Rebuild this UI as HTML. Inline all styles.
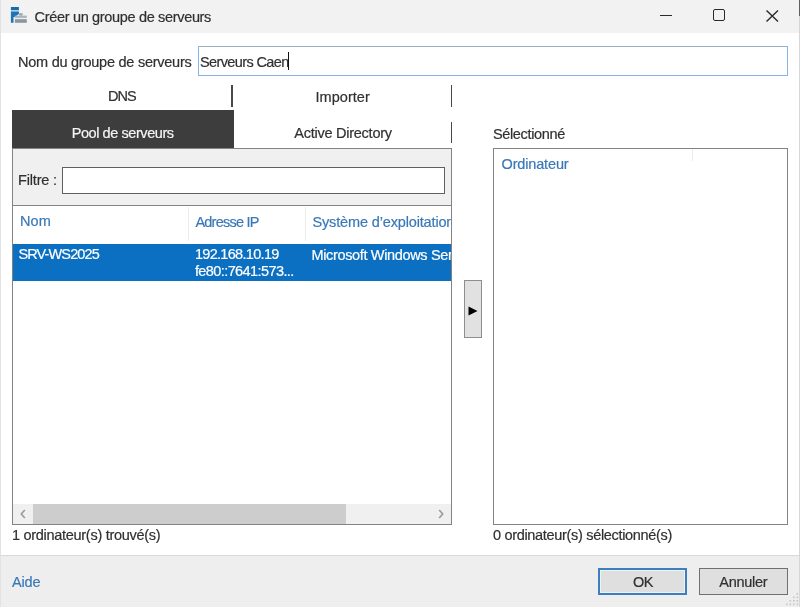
<!DOCTYPE html>
<html><head><meta charset="utf-8">
<style>
*{margin:0;padding:0;box-sizing:border-box}
html,body{width:800px;height:607px;overflow:hidden;background:#fff}body{filter:blur(0.35px)}
body{position:relative;font-family:"Liberation Sans",sans-serif;font-size:14.5px;color:#303030}
.a{position:absolute}
.t{position:absolute;white-space:nowrap;line-height:14px;-webkit-text-stroke:0.2px currentColor}
.titlebar{left:0;top:0;width:800px;height:33.3px;background:#f2f2f2}
.lborder{left:0;top:0;width:1.3px;height:607px;background:#e2e2e2}
.box{position:absolute;border:1px solid #838383}
.sep{position:absolute;width:1.3px;background:#484848}
.hdr{color:#3a78b8}
.footer{left:0;top:555px;width:800px;height:52px;background:#eeeeee;border-top:1px solid #d9d9d9}
.btn{position:absolute;background:#e1e1e1;border:1px solid #adadad}
</style></head><body>
<div class="a titlebar"></div>


<!-- title icon -->
<svg class="a" style="left:0;top:0" width="32" height="32" viewBox="0 0 32 32">
  <rect x="10.9" y="7" width="8" height="3.1" fill="#1b6aa9"/>
  <rect x="10.9" y="10.1" width="8" height="1.3" fill="#9fd3ee"/>
  <path d="M10.9 11.4 H18.9 V14 L14.5 17 H13.5 V22.8 H10.9 Z" fill="#1f72b4"/>
  <rect x="19.2" y="13.2" width="3.4" height="2.4" fill="#9aa6ad"/>
  <rect x="14.9" y="15.6" width="11.9" height="2.3" fill="#a9b4ba"/>
  <rect x="14.9" y="17.9" width="11.9" height="1.3" fill="#e6eef2"/>
  <rect x="14.9" y="19.2" width="11.9" height="3.6" fill="#8a969d"/>
</svg>
<div id="title" class="t" style="left:34.60px;top:10.00px;letter-spacing:-0.331px">Créer un groupe de serveurs</div>

<!-- window controls -->
<div class="a" style="left:660px;top:14.7px;width:12px;height:1.6px;background:#2a2a2a"></div>
<div class="a" style="left:713px;top:9.2px;width:11.5px;height:11.4px;border:1.6px solid #2a2a2a;border-radius:2px"></div>
<svg class="a" style="left:765px;top:9px" width="15" height="14" viewBox="0 0 15 14"><path d="M1.5 1.5 L13 12.5 M13 1.5 L1.5 12.5" stroke="#2a2a2a" stroke-width="1.4" fill="none"/></svg>

<!-- name -->
<div id="nom" class="t" style="left:18.00px;top:54.50px;letter-spacing:-0.250px">Nom du groupe de serveurs</div>
<div class="a" style="left:198px;top:45.5px;width:590px;height:30.5px;border:1px solid #86b3e3;border-top-color:#98b0c4"></div>
<div id="caen" class="t" style="left:200.00px;top:54.50px;letter-spacing:-0.625px">Serveurs Caen</div>
<div class="a" style="left:287.7px;top:51.5px;width:1.4px;height:18px;background:#111"></div>

<!-- tabs -->
<div id="dns" class="t" style="left:107.90px;top:89.10px;letter-spacing:-0.900px">DNS</div>
<div class="sep" style="left:231.3px;top:85.4px;height:21.6px"></div>
<div id="imp" class="t" style="left:315.50px;top:89.70px;letter-spacing:0.042px">Importer</div>
<div class="sep" style="left:451px;top:85.4px;height:21.6px"></div>

<div class="a" style="left:12px;top:110px;width:222px;height:39px;background:#3d3d3d"></div>
<div id="pool" class="t" style="left:71.70px;top:125.50px;color:#f5f5f5;letter-spacing:-0.427px">Pool de serveurs</div>
<div id="ad" class="t" style="left:294.30px;top:125.50px;letter-spacing:-0.253px">Active Directory</div>
<div class="sep" style="left:451px;top:122px;height:21px"></div>

<!-- left panel -->
<div class="box" style="left:12px;top:148px;width:440px;height:377px;background:#fff"></div>
<div class="a" style="left:13px;top:149px;width:438px;height:57px;background:#f0f0f0"></div>
<div class="a" style="left:13px;top:205px;width:438px;height:1px;background:#838383"></div>
<div id="filtre" class="t" style="left:18.00px;top:173.40px;letter-spacing:-0.171px">Filtre :</div>
<div class="box" style="left:62px;top:167px;width:383px;height:26.5px;background:#fff;border:1.3px solid #606060"></div>

<!-- list header -->
<div id="hnom" class="t hdr" style="left:19.90px;top:214.00px;letter-spacing:0.100px">Nom</div>
<div class="a" style="left:188px;top:207px;width:1px;height:34px;background:#ececec"></div>
<div id="hip" class="t hdr" style="left:195.40px;top:214.60px;letter-spacing:-0.756px">Adresse IP</div>
<div class="a" style="left:305px;top:207px;width:1px;height:34px;background:#ececec"></div>
<div class="a" style="left:306px;top:207px;width:145px;height:34px;overflow:hidden"><div class="t hdr" style="left:6.5px;top:7.9px;letter-spacing:-0.15px">Système d’exploitation</div></div>

<!-- selected row -->
<div class="a" style="left:13px;top:244px;width:438px;height:37px;background:#0b70c2"></div>
<div id="srv" class="t" style="left:18.40px;top:247.00px;color:#fff;letter-spacing:-0.867px">SRV-WS2025</div>
<div id="ip1" class="t" style="left:194.90px;top:247.10px;color:#fff;letter-spacing:-0.691px">192.168.10.19</div>
<div id="ip2" class="t" style="left:194.90px;top:264.40px;color:#fff;letter-spacing:-0.588px">fe80::7641:573...</div>
<div class="a" style="left:311px;top:244px;width:140px;height:37px;overflow:hidden"><div class="t" style="left:0.5px;top:3.7px;color:#fff;letter-spacing:-0.35px">Microsoft Windows Server</div></div>

<!-- h scrollbar -->
<div class="a" style="left:13px;top:504px;width:438px;height:20px;background:#f0f0f0"></div>
<div class="a" style="left:33px;top:504px;width:313px;height:20px;background:#cdcdcd"></div>
<svg class="a" style="left:18px;top:508px" width="12" height="12" viewBox="0 0 12 12"><path d="M6.8 2 L3.3 6 L6.8 10" stroke="#9a9a9a" stroke-width="1.6" fill="none"/></svg>
<svg class="a" style="left:435px;top:508px" width="12" height="12" viewBox="0 0 12 12"><path d="M4.2 2 L7.7 6 L4.2 10" stroke="#9a9a9a" stroke-width="1.6" fill="none"/></svg>

<div id="trouve" class="t" style="left:11.90px;top:527.80px;letter-spacing:-0.284px">1 ordinateur(s) trouvé(s)</div>

<!-- arrow button -->
<div class="btn" style="left:464px;top:280.2px;width:17.6px;height:58.3px;border-color:#8e8e8e"></div>
<svg class="a" style="left:467px;top:304.8px" width="12" height="12" viewBox="0 0 12 12"><path d="M1.5 1.5 L10.5 6 L1.5 10.5 Z" fill="#000"/></svg>

<!-- right panel -->
<div id="sel" class="t" style="left:492.90px;top:126.70px;letter-spacing:-0.340px">Sélectionné</div>
<div class="box" style="left:493px;top:148px;width:295px;height:377px;background:#fff"></div>
<div id="ordi" class="t hdr" style="left:501.60px;top:156.60px;letter-spacing:-0.166px">Ordinateur</div>
<div class="a" style="left:692px;top:149px;width:1px;height:12px;background:#ececec"></div>
<div id="selc" class="t" style="left:493.00px;top:527.50px;letter-spacing:-0.320px">0 ordinateur(s) sélectionné(s)</div>

<!-- footer -->
<div class="a footer"></div>
<div id="aide" class="t hdr" style="left:12.00px;top:574.90px;letter-spacing:-0.167px">Aide</div>
<div class="btn" style="left:598px;top:568.3px;width:89px;height:27px;border:2px solid #3f7ebd;box-shadow:inset 0 0 0 1px #eaf2fa;background:#dfdfdf"></div>
<div id="ok" class="t" style="left:632.90px;top:575.00px;letter-spacing:-0.500px">OK</div>
<div class="btn" style="left:698.6px;top:568.3px;width:89.2px;height:26.8px;border:1.4px solid #707070;background:#dfdfdf"></div>
<div id="ann" class="t" style="left:719.30px;top:574.70px;letter-spacing:-0.283px">Annuler</div>

<!-- size grip -->
<svg class="a" style="left:784px;top:591px" width="16" height="16" viewBox="0 0 16 16" fill="#c6c6c6"><rect x="12.5" y="2" width="1.6" height="1.6"/><rect x="9" y="5.5" width="1.6" height="1.6"/><rect x="12.5" y="5.5" width="1.6" height="1.6"/><rect x="5.5" y="9" width="1.6" height="1.6"/><rect x="9" y="9" width="1.6" height="1.6"/><rect x="12.5" y="9" width="1.6" height="1.6"/><rect x="2" y="12.5" width="1.6" height="1.6"/><rect x="5.5" y="12.5" width="1.6" height="1.6"/><rect x="9" y="12.5" width="1.6" height="1.6"/><rect x="12.5" y="12.5" width="1.6" height="1.6"/></svg>
<div class="a lborder"></div>
<div class="a" style="left:798.6px;top:0;width:1.4px;height:607px;background:#d6d6d6"></div>
<div class="a" style="left:798.6px;top:0;width:1.4px;height:15.8px;background:#606060"></div>
</body></html>
